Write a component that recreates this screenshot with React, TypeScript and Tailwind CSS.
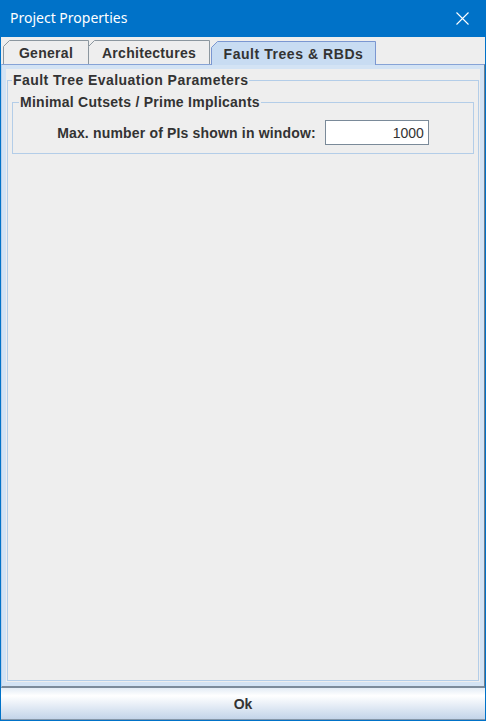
import React from "react";

function Tab({ label, width, selected, className, track }: { label: string; width: number; selected?: boolean; className?: string; track: string }) {
  const h = 24;
  const stroke = selected ? "#7b97d1" : "#8c979f";
  const fill = selected ? "#c8dcf2" : "#eeeeee";
  return (
    <div className={"relative flex items-center justify-center h-[24px] " + (className ?? "")} style={{ width }}>
      <svg className="absolute inset-0" width={width} height={h}>
        <polygon
          points={`0.5,${h + 2} 0.5,6.5 6.5,0.5 ${width - 0.5},0.5 ${width - 0.5},${h + 2}`}
          fill={fill}
          stroke={stroke}
          strokeWidth={1}
        />
      </svg>
      <span className={"relative pt-px text-[14px] leading-[16px] font-bold text-[#333333] " + track}>{label}</span>
    </div>
  );
}

export default function App() {
  return (
    <div
      className="w-[486px] h-[721px] bg-[#0072c8] flex flex-col px-px pb-px"
      style={{ fontFamily: '"Liberation Sans", Arial, sans-serif' }}
    >
      <div className="h-[37px] flex items-center justify-between pl-[9px] pr-[16px] text-white">
        <span className="text-[14px] leading-[20px] pb-px" style={{ fontFamily: '"Noto Sans", "Open Sans", sans-serif' }}>
          Project Properties
        </span>
        <svg width="13" height="13" viewBox="0 0 13 13" className="mb-px">
          <path d="M0.5 0.5 L12.5 12.5 M12.5 0.5 L0.5 12.5" stroke="white" strokeWidth="1.1" />
        </svg>
      </div>
      <div className="flex-1 bg-[#eeeeee] flex flex-col">
        <div className="h-[27px] flex items-end pl-[2px] overflow-visible">
          <Tab label="General" width={86} track="tracking-[0.3px]" />
          <Tab label="Architectures" width={122} className="ml-[-1px]" track="tracking-[0.3px]" />
          <Tab label="Fault Trees & RBDs" width={165} selected className="ml-px mb-[-1px] z-10" track="tracking-[0.55px]" />
        </div>
        <div className="flex-1 flex flex-col bg-[#d3e3f4] border-t border-t-[#86a3d6] border-l border-l-[#b7cfeb] border-r border-r-[#6f7e8e] border-b-2 border-b-[#7c8b9b] p-[4px]">
          <div className="flex-1 flex flex-col bg-[#eeeeee]">
            <fieldset className="flex-1 mt-[3px] mx-px mb-px border border-[#b3cde8] flex flex-col">
              <legend className="ml-[4px] px-px text-[14px] leading-[16px] font-bold text-[#333333] tracking-[0.45px]">
                Fault Tree Evaluation Parameters
              </legend>
              <fieldset className="mt-[6px] mx-[4px] border border-[#b3cde8]">
                <legend className="ml-[6px] px-px text-[14px] leading-[16px] font-bold text-[#333333] tracking-[0.26px]">
                  Minimal Cutsets / Prime Implicants
                </legend>
                <div className="pt-[10px] pb-[8px] flex items-center justify-center gap-[9px]">
                  <span className="text-[14px] leading-[16px] font-bold text-[#333333] tracking-[0.17px]">
                    Max. number of PIs shown in window:
                  </span>
                  <div className="w-[104px] h-[25px] border border-[#7a8a99] bg-white flex items-center justify-end pr-[4px] text-[14px] leading-[16px] text-[#333333]">
                    1000
                  </div>
                </div>
              </fieldset>
            </fieldset>
          </div>
        </div>
        <div className="h-[32px] flex items-center justify-center border-b border-b-[#8596a8] bg-gradient-to-b from-[#e4ecf5] via-[#ffffff] via-[25%] to-[#c3d4e9]">
          <span className="text-[14px] leading-[16px] font-bold text-[#333333]">Ok</span>
        </div>
      </div>
    </div>
  );
}
